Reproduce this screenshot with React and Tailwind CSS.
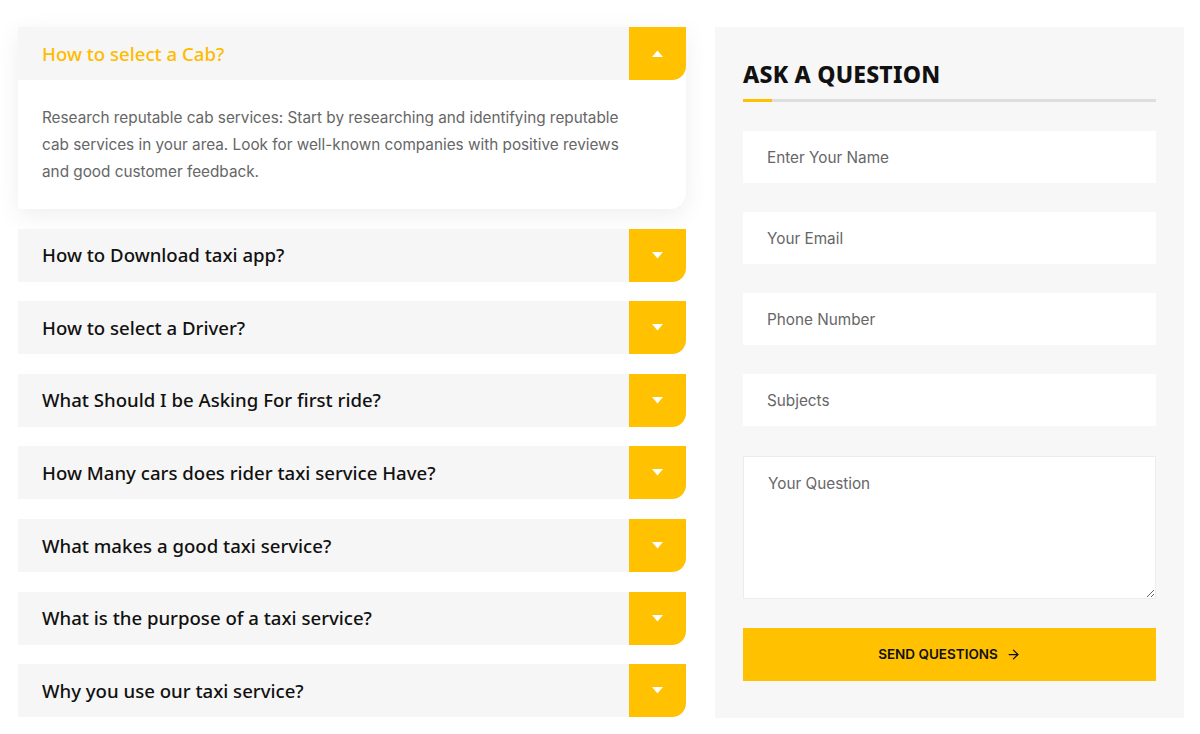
import React, { useState } from 'react';
import { ArrowRight } from 'lucide-react';

const inter = { fontFamily: 'Inter, "Noto Sans", sans-serif' };
const heading = { fontFamily: '"Noto Sans", sans-serif' };

const faqs = [
    {
        q: 'How to select a Cab?',
        a: 'Research reputable cab services: Start by researching and identifying reputable cab services in your area. Look for well-known companies with positive reviews and good customer feedback.'
    },
    { q: 'How to Download taxi app?', a: '' },
    { q: 'How to select a Driver?', a: '' },
    { q: 'What Should I be Asking For first ride?', a: '' },
    { q: 'How Many cars does rider taxi service Have?', a: '' },
    { q: 'What makes a good taxi service?', a: '' },
    { q: 'What is the purpose of a taxi service?', a: '' },
    { q: 'Why you use our taxi service?', a: '' }
];

function Caret({ up }) {
    return (
        <svg width="11" height="7" viewBox="0 0 11 7" className={up ? 'rotate-180' : ''}>
            <path d="M0 0 H11 L5.5 6.5 Z" fill="#fff" />
        </svg>
    );
}

function FaqItem({ item, open, onToggle }) {
    return (
        <div className={open ? 'rounded-br-[16px] bg-white shadow-[0_6px_24px_rgba(0,0,0,0.07)]' : ''}>
            <button
                onClick={onToggle}
                className="flex h-[53px] w-full items-stretch rounded-br-[14px] bg-[#f6f6f6] text-left"
            >
                <span
                    className={`flex flex-1 items-center pl-6 text-[18.6px] font-medium ${open ? 'text-[#ffbb00]' : 'text-[#111]'}`}
                    style={heading}
                >
                    {item.q}
                </span>
                <span className="flex w-[57px] items-center justify-center rounded-br-[14px] bg-[#ffc100]">
                    <Caret up={open} />
                </span>
            </button>
            {open && (
                <p className="pl-6 pr-[60px] pt-[24px] pb-[24px] text-[15.3px] leading-[27px] text-[#666]" style={inter}>
                    {item.a}
                </p>
            )}
        </div>
    );
}

export default function App() {
    const [openIdx, setOpenIdx] = useState(0);

    return (
        <div className="flex w-[1200px] gap-[29px] bg-white pl-[18px] pt-[27px]" style={inter}>
            <div className="flex w-[668px] flex-col gap-[19.6px]">
                {faqs.map((item, i) => (
                    <FaqItem
                        key={i}
                        item={item}
                        open={openIdx === i}
                        onToggle={() => setOpenIdx(openIdx === i ? -1 : i)}
                    />
                ))}
            </div>

            <div className="h-[691px] w-[469px] bg-[#f7f7f7] px-[28px] pt-[33px]">
                <h2 className="text-[23px] font-extrabold leading-[28px] tracking-[0.2px] text-[#111]" style={heading}>
                    ASK A QUESTION
                </h2>
                <div className="relative mt-[11px] h-[3px] w-[413px] bg-[#dedede]">
                    <div className="absolute left-0 top-0 h-[3px] w-[29px] bg-[#ffc100]" />
                </div>

                <form className="mt-[29px] flex w-[413px] flex-col gap-[29px]" onSubmit={e => e.preventDefault()}>
                    {['Enter Your Name', 'Your Email', 'Phone Number', 'Subjects'].map(ph => (
                        <input
                            key={ph}
                            type="text"
                            placeholder={ph}
                            style={inter}
                            className="h-[52px] w-full bg-white px-6 text-[15.3px] text-[#333] outline-none placeholder:text-[#666]"
                        />
                    ))}
                    <textarea
                        placeholder="Your Question"
                        style={inter}
                        className="mt-[1px] h-[143px] w-full border border-[#ececec] bg-white px-6 pt-[16px] text-[15.3px] text-[#333] outline-none placeholder:text-[#666]"
                    />
                    <button
                        type="submit"
                        style={inter}
                        className="flex h-[53px] w-full items-center justify-center gap-2 bg-[#ffc100] text-[13.5px] font-semibold text-[#111]"
                    >
                        SEND QUESTIONS
                        <ArrowRight size={15} strokeWidth={2} />
                    </button>
                </form>
            </div>
        </div>
    );
}
